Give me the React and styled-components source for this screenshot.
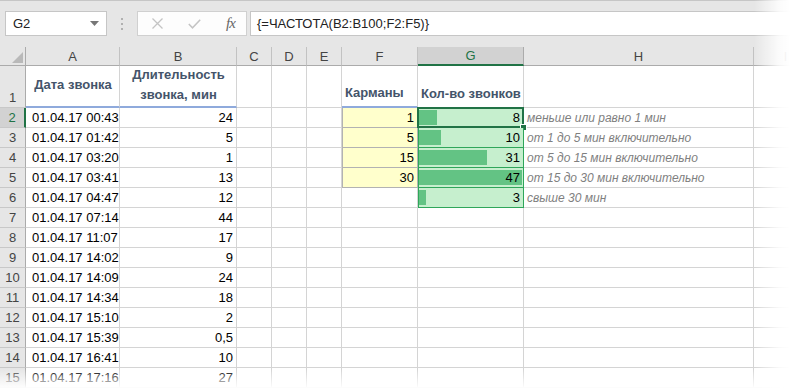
import React from 'react'
import styled, { createGlobalStyle } from 'styled-components'

const GlobalStyle = createGlobalStyle`
  body {
    margin: 0;
    background: #fff;
    font-family: "Liberation Sans", Arial, sans-serif;
  }
`

const GREEN = '#217346'
const GRID = '#d4d4d4'

const calls = [
  ['01.04.17 00:43', '24'],
  ['01.04.17 01:42', '5'],
  ['01.04.17 03:20', '1'],
  ['01.04.17 03:41', '13'],
  ['01.04.17 04:47', '12'],
  ['01.04.17 07:14', '44'],
  ['01.04.17 11:07', '17'],
  ['01.04.17 14:02', '9'],
  ['01.04.17 14:09', '24'],
  ['01.04.17 14:34', '18'],
  ['01.04.17 15:10', '2'],
  ['01.04.17 15:39', '0,5'],
  ['01.04.17 16:41', '10'],
  ['01.04.17 17:16', '27'],
]

const bins = ['1', '5', '15', '30']
const counts = [8, 10, 31, 47, 3]
const notes = [
  'меньше или равно 1 мин',
  'от 1 до 5 мин включительно',
  'от 5 до 15 мин включительно',
  'от 15 до 30 мин включительно',
  'свыше 30 мин',
]
const maxCount = Math.max(...counts)

const App = () => {
  return (
    <Window>
      <GlobalStyle />
      <Toolbar>
        <NameBox>
          G2
          <svg width="9" height="5" viewBox="0 0 9 5">
            <path d="M0 0 L9 0 L4.5 5 Z" fill="#777" />
          </svg>
        </NameBox>
        <Grip>
          <i /><i /><i />
        </Grip>
        <FxBox>
          <svg width="11" height="11" viewBox="0 0 11 11">
            <path d="M0.5 0.5 L10.5 10.5 M10.5 0.5 L0.5 10.5" stroke="#c4c4c4" strokeWidth="1.3" fill="none" />
          </svg>
          <svg width="13" height="10" viewBox="0 0 13 10">
            <path d="M0.8 5 L4.5 8.8 L12.2 0.8" stroke="#c4c4c4" strokeWidth="1.5" fill="none" />
          </svg>
          <FxLabel>fx</FxLabel>
        </FxBox>
        <FormulaInput>{'{=ЧАСТОТА(B2:B100;F2:F5)}'}</FormulaInput>
      </Toolbar>

      <Sheet>
        <Corner>
          <svg width="11" height="11" viewBox="0 0 11 11">
            <path d="M11 0 L11 11 L0 11 Z" fill="#b9b9b9" />
          </svg>
        </Corner>
        {['A', 'B', 'C', 'D', 'E', 'F', 'G', 'H', 'I'].map((c) => (
          <ColHead key={c} $active={c === 'G'}>{c}</ColHead>
        ))}

        <RowHead $bottom>1</RowHead>
        <TitleCell $center>Дата звонка</TitleCell>
        <TitleCell $center>Длительность<br />звонка, мин</TitleCell>
        <Cell />
        <Cell />
        <Cell />
        <TitleCell $bottom>Карманы</TitleCell>
        <TitleCell $bottom $plain>Кол-во звонков</TitleCell>
        <Cell />
        <Cell />

        {calls.map(([date, dur], i) => {
          const row = i + 2
          const count = counts[i]
          return (
            <React.Fragment key={row}>
              <RowHead $active={row === 2}>{row}</RowHead>
              <Cell>{date}</Cell>
              <Cell $right>{dur}</Cell>
              <Cell />
              <Cell />
              <Cell />
              {i < bins.length ? <NoteCell>{bins[i]}</NoteCell> : <Cell />}
              {count !== undefined ? (
                <BarCell>
                  <Bar style={{ width: Math.round((count / maxCount) * 103) }} />
                  <BarValue>{count}</BarValue>
                  {i === 0 && (
                    <ActiveFrame>
                      <Handle />
                    </ActiveFrame>
                  )}
                </BarCell>
              ) : (
                <Cell />
              )}
              {notes[i] ? <ExplainCell>{notes[i]}</ExplainCell> : <Cell />}
              <Cell />
            </React.Fragment>
          )
        })}
      </Sheet>

      <RightFade />
      <BottomFade />
    </Window>
  )
}

export default App

const Window = styled.div`
  position: relative;
  width: 790px;
  height: 389px;
  overflow: hidden;
  background: #fff;
  font-size: 13px;
  color: #000;
`

const Toolbar = styled.div`
  display: flex;
  align-items: flex-start;
  box-sizing: border-box;
  height: 47px;
  padding: 10px 0 0 5px;
  background: #e6e6e6;
  border-top: 1px solid #c6c6c6;
`

const NameBox = styled.div`
  display: flex;
  align-items: center;
  justify-content: space-between;
  box-sizing: border-box;
  width: 102px;
  height: 25px;
  padding: 0 7px;
  background: #fff;
  border: 1px solid #c6c6c6;
  font-size: 13px;
  color: #222;
`

const Grip = styled.div`
  display: flex;
  flex-direction: column;
  gap: 3px;
  width: 30px;
  align-items: center;
  padding-top: 7px;

  i {
    display: block;
    width: 2px;
    height: 2px;
    background: #b0b0b0;
  }
`

const FxBox = styled.div`
  display: flex;
  align-items: center;
  gap: 25px;
  box-sizing: border-box;
  width: 110px;
  height: 25px;
  padding-left: 14px;
  background: #fdfdfd;
  border: 1px solid #d0d0d0;
`

const FxLabel = styled.span`
  font-family: "Liberation Serif", "Times New Roman", serif;
  font-style: italic;
  font-size: 15px;
  color: #666;
  letter-spacing: -1px;
`

const FormulaInput = styled.div`
  flex: 1;
  display: flex;
  align-items: center;
  box-sizing: border-box;
  height: 25px;
  margin-left: 3px;
  padding-left: 6px;
  background: #fff;
  border: 1px solid #c6c6c6;
  border-right: none;
  font-size: 13px;
  color: #222;
`

const Sheet = styled.div`
  display: grid;
  grid-template-columns: 26px 94px 117px 35px 35px 35px 76px 106px 230px 64px;
  grid-template-rows: 19px 42px repeat(14, 20px);
`

const Corner = styled.div`
  display: flex;
  align-items: flex-end;
  justify-content: flex-end;
  box-sizing: border-box;
  padding: 0 2px 2px 0;
  background: #e6e6e6;
  border-right: 1px solid #ababab;
  border-bottom: 1px solid #ababab;
`

const ColHead = styled.div`
  display: flex;
  align-items: center;
  justify-content: center;
  box-sizing: border-box;
  background: ${(p) => (p.$active ? '#d2d2d2' : '#e6e6e6')};
  border-right: 1px solid ${(p) => (p.$active ? '#ababab' : '#c2c2c2')};
  border-bottom: ${(p) => (p.$active ? `2px solid ${GREEN}` : '1px solid #ababab')};
  color: ${(p) => (p.$active ? GREEN : '#444')};
  font-size: 13px;
`

const RowHead = styled.div`
  display: flex;
  align-items: ${(p) => (p.$bottom ? 'flex-end' : 'center')};
  justify-content: center;
  box-sizing: border-box;
  padding-bottom: ${(p) => (p.$bottom ? '2px' : '0')};
  background: ${(p) => (p.$active ? '#d2d2d2' : '#e6e6e6')};
  border-right: ${(p) => (p.$active ? `2px solid ${GREEN}` : '1px solid #ababab')};
  border-bottom: 1px solid #c8c8c8;
  color: ${(p) => (p.$active ? GREEN : '#444')};
  font-size: 13px;
`

const Cell = styled.div`
  display: flex;
  align-items: center;
  justify-content: ${(p) => (p.$right ? 'flex-end' : 'flex-start')};
  box-sizing: border-box;
  min-width: 0;
  padding: 0 3px 0 6px;
  border-right: 1px solid ${GRID};
  border-bottom: 1px solid ${GRID};
  white-space: nowrap;
`

const TitleCell = styled.div`
  display: flex;
  align-items: ${(p) => (p.$bottom ? 'flex-end' : 'center')};
  justify-content: ${(p) => (p.$center ? 'center' : 'flex-start')};
  box-sizing: border-box;
  padding: 0 2px 3px 3px;
  border-right: 1px solid ${GRID};
  border-bottom: ${(p) => (p.$plain ? `1px solid ${GRID}` : '2px solid #8faadc')};
  text-align: center;
  line-height: 20px;
  font-weight: bold;
  color: #44546a;
  white-space: nowrap;
`

const NoteCell = styled.div`
  display: flex;
  align-items: center;
  justify-content: flex-end;
  box-sizing: border-box;
  padding-right: 3px;
  background: #ffffcc;
  border-right: 1px solid #b2b2b2;
  border-bottom: 1px solid #b2b2b2;
  box-shadow: inset 1px 0 0 #b2b2b2;
`

const BarCell = styled.div`
  position: relative;
  display: grid;
  box-sizing: border-box;
  background: #c6efce;
  border-right: 1px solid #2fa65a;
  border-bottom: 1px solid #2fa65a;
  box-shadow: inset 1px 0 0 #2fa65a;
`

const Bar = styled.div`
  grid-area: 1 / 1;
  justify-self: start;
  margin: 2px 0 2px 1px;
  background: #63c384;
`

const BarValue = styled.span`
  grid-area: 1 / 1;
  justify-self: end;
  align-self: center;
  padding-right: 3px;
`

const ActiveFrame = styled.div`
  position: absolute;
  top: -1px;
  left: -1px;
  right: -1px;
  bottom: -1px;
  border: 2px solid ${GREEN};
`

const Handle = styled.div`
  position: absolute;
  right: -5px;
  bottom: -5px;
  width: 5px;
  height: 5px;
  background: ${GREEN};
  border: 1px solid #fff;
`

const ExplainCell = styled(Cell)`
  padding-left: 3px;
  font-size: 12px;
  font-style: italic;
  color: #7f7f7f;
`

const RightFade = styled.div`
  position: absolute;
  top: 0;
  right: 0;
  bottom: 0;
  width: 36px;
  background: linear-gradient(to right, rgba(255, 255, 255, 0), rgba(255, 255, 255, 0.85) 70%, #fff);
  pointer-events: none;
`

const BottomFade = styled.div`
  position: absolute;
  left: 0;
  right: 0;
  bottom: 0;
  height: 20px;
  background: linear-gradient(to bottom, rgba(255, 255, 255, 0), rgba(255, 255, 255, 0.6) 60%, #fff);
  pointer-events: none;
`
